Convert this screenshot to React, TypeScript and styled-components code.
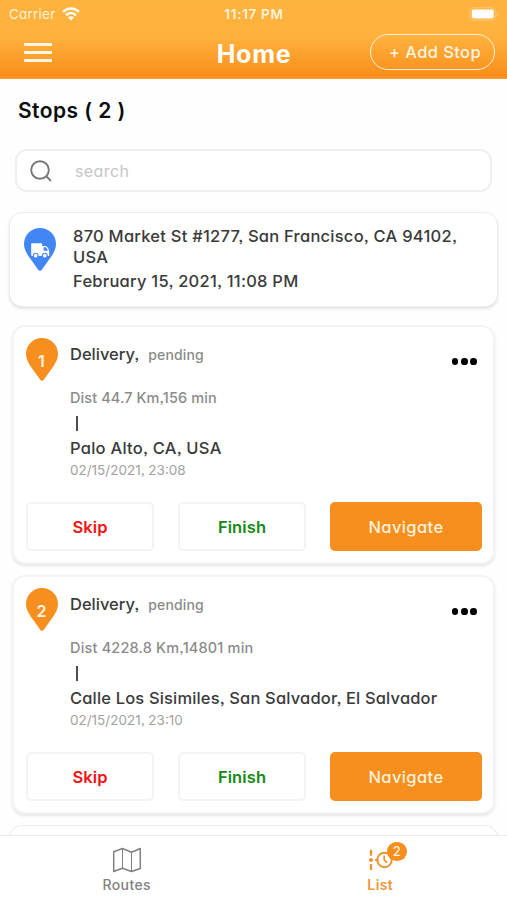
import React from "react";
import styled, { createGlobalStyle } from "styled-components";

const Global = createGlobalStyle`
  * { box-sizing: border-box; }
  body { margin: 0; background: #fefefe; }
  button, input { font: inherit; letter-spacing: inherit; margin: 0; }
`;

const Screen = styled.div`
  width: 507px;
  height: 900px;
  display: flex;
  flex-direction: column;
  overflow: hidden;
  background: #fefefe;
  font-family: Inter, "Liberation Sans", sans-serif;
  font-feature-settings: "cv11", "ss03";
  color: #3a3a3a;
`;

const Header = styled.header`
  flex: none;
  height: 79px;
  background: linear-gradient(#ffb33f 0, #ffb13c 38px, #f98d1b 77px, #fba343 79px);
  color: #fff;
`;

const StatusBar = styled.div`
  height: 27px;
  display: grid;
  grid-template-columns: 1fr auto 1fr;
  align-items: center;
  padding: 1px 8px 0 9px;
  font-size: 13.5px;
  color: #fff2dc;
`;

const Carrier = styled.div`
  display: flex;
  align-items: center;
  gap: 7px;
  letter-spacing: 0.22px;
`;

const Clock = styled.div`
  font-weight: 600;
  font-size: 13.5px;
  letter-spacing: 0.7px;
`;

const BatterySlot = styled.div`
  display: flex;
  justify-content: flex-end;
`;

const NavBar = styled.div`
  height: 50px;
  display: grid;
  grid-template-columns: 1fr auto 1fr;
  align-items: center;
  padding: 0 12px 0 24px;
`;

const MenuButton = styled.button`
  width: 28px;
  height: 19px;
  padding: 0;
  margin-top: 1px;
  border: 0;
  background: none;
  display: flex;
  flex-direction: column;
  justify-content: space-between;
  span { height: 3px; background: #fff6e8; }
`;

const Title = styled.h1`
  margin: 3px 0 0 -11px;
  font-size: 25px;
  line-height: 30px;
  font-weight: 700;
  letter-spacing: 0.75px;
`;

const AddStop = styled.button`
  justify-self: end;
  width: 125px;
  height: 36px;
  padding: 0 0 0 5px;
  border: 1.5px solid #fff1dc;
  border-radius: 18px;
  background: none;
  color: #fff4e2;
  font-size: 16.5px;
  font-weight: 500;
  letter-spacing: 0.4px;
  white-space: nowrap;
`;

const Content = styled.main`
  flex: 1;
  min-height: 0;
  overflow: hidden;
  display: flex;
  flex-direction: column;
`;

const Heading = styled.h2`
  margin: 19px 0 0 18px;
  font-size: 21px;
  line-height: 26px;
  font-weight: 600;
  letter-spacing: 0.43px;
  color: #0c0c0c;
`;

const SearchBox = styled.label`
  flex: none;
  height: 43px;
  margin: 25px 15px 0;
  padding: 0 13px;
  display: flex;
  align-items: center;
  gap: 23px;
  border: 2px solid #efefef;
  border-radius: 12px;
  background: #fff;
  svg { flex: none; }
  input {
    flex: 1;
    border: 0;
    padding: 0;
    outline: 0;
    background: none;
    font-size: 16px;
    letter-spacing: 0.4px;
    font-feature-settings: inherit;
  }
  input::placeholder { color: #c6c6c6; }
`;

const Card = styled.section`
  flex: none;
  border: 1px solid #ececec;
  border-radius: 13px;
  background: #fff;
  box-shadow: 0 2px 3px rgba(0, 0, 0, 0.1);
`;

const DepotCard = styled(Card)`
  height: 95px;
  margin: 20px 9px 0;
  padding: 14px 14px 12px 13px;
  display: flex;
  gap: 16px;
`;

const DepotText = styled.div`
  display: flex;
  flex-direction: column;
  gap: 3px;
  margin-top: -1px;
  font-size: 16.5px;
  line-height: 21px;
  font-weight: 500;
  letter-spacing: 0.25px;
  white-space: nowrap;
`;

const StopCard = styled(Card)<{ $first?: boolean }>`
  height: 239px;
  margin: ${(p) => (p.$first ? 18 : 11)}px 12px 0;
  padding: 10px 11px 11px;
  display: flex;
  flex-direction: column;
  justify-content: space-between;
  border: 2px solid #f4f4f4;
`;

const StopMain = styled.div`
  display: flex;
  gap: 11px;
`;

const StopText = styled.div`
  flex: 1;
  display: flex;
  flex-direction: column;
  white-space: nowrap;
`;

const KindLine = styled.div`
  height: 22px;
  margin-top: 6px;
  display: flex;
  align-items: center;
  gap: 9px;
`;

const Kind = styled.span`
  font-size: 16.5px;
  font-weight: 500;
  letter-spacing: 0;
`;

const State = styled.span`
  font-size: 14px;
  font-weight: 500;
  letter-spacing: 0.15px;
  color: #8b8b8b;
`;

const Distance = styled.div<{ $spacing: number }>`
  margin-top: 24px;
  font-size: 14.5px;
  line-height: 18px;
  font-weight: 500;
  color: #8b8b8b;
  letter-spacing: ${(p) => p.$spacing}px;
`;

const Tick = styled.div`
  width: 2px;
  height: 15px;
  margin: 9px 0 0 6px;
  background: #4c4c4c;
`;

const Place = styled.div<{ $spacing: number }>`
  margin-top: 7px;
  font-size: 16.5px;
  line-height: 20px;
  font-weight: 500;
  letter-spacing: ${(p) => p.$spacing}px;
`;

const DateLine = styled.div`
  margin-top: 3px;
  font-size: 13.5px;
  line-height: 18px;
  color: #a2a2a2;
`;

const MoreButton = styled.button`
  align-self: flex-start;
  margin: 21px 5px 0 0;
  padding: 0;
  border: 0;
  background: none;
  display: flex;
  gap: 2.6px;
  span { width: 6.7px; height: 6.7px; border-radius: 50%; background: #000; }
`;

const Actions = styled.div`
  display: grid;
  grid-template-columns: 128px 128px 152px;
  justify-content: space-between;
  margin-left: 1px;
`;

const Action = styled.button<{ $color: string; $filled?: boolean }>`
  height: 49px;
  padding: 0;
  border: 2px solid ${(p) => (p.$filled ? "#f78f1e" : "#f3f3f3")};
  border-radius: 5px;
  background: ${(p) => (p.$filled ? "#f78f1e" : "#fff")};
  color: ${(p) => p.$color};
  font-size: 16.5px;
  font-weight: ${(p) => (p.$filled ? 500 : 600)};
  letter-spacing: ${(p) => (p.$filled ? 0.4 : 0.1)}px;
`;

const NextCard = styled(Card)`
  height: 95px;
  margin: 11px 9px 0;
`;

const TabBar = styled.nav`
  flex: none;
  height: 65px;
  border-top: 1px solid #ebebeb;
  background: #fff;
  display: grid;
  grid-template-columns: 1fr 1fr;
`;

const Tab = styled.div<{ $active?: boolean }>`
  display: flex;
  flex-direction: column;
  align-items: center;
  padding-top: 9px;
  gap: 1px;
  font-size: 14px;
  line-height: 18px;
  font-weight: ${(p) => (p.$active ? 600 : 500)};
  letter-spacing: 0.4px;
  color: ${(p) => (p.$active ? "#f1953a" : "#828282")};
`;

const IconSlot = styled.div`
  position: relative;
  height: 30px;
  display: flex;
  align-items: center;
`;

const Badge = styled.span`
  position: absolute;
  left: 19px;
  top: -3px;
  width: 20px;
  height: 19px;
  border-radius: 10px;
  background: #f78d1d;
  color: #fff3e2;
  font-size: 13px;
  line-height: 19px;
  font-weight: 500;
  letter-spacing: 0;
  text-align: center;
`;

const PinNumber = styled.text`
  font-size: 16px;
  font-weight: 600;
  fill: #fff4e4;
  text-anchor: middle;
`;

function Pin({ color, children }: { color: string; children: React.ReactNode }) {
  return (
    <svg width="34" height="45" viewBox="0 0 34 45">
      <path
        d="M17 1C8 1 1 8.100 1 17c0 4.800 2.300 8.800 4.900 12.800l9.500 13.100a2 2 0 0 0 3.200 0l9.500-13.100C30.700 25.800 33 21.800 33 17 33 8.100 26 1 17 1Z"
        fill={color}
      />
      {children}
    </svg>
  );
}

function TruckMark() {
  return (
    <g>
      <path d="M8.200 16.300h10.900v2.700h3.400c2 .5 3.400 3 3.700 5.300v4.700h-17c-.6 0-1-.3-1-.8Z" fill="#fff" />
      <path d="M20.600 20.300h2c1 .5 1.800 1.900 2.200 3.400h-4.200Z" fill="#4285f4" />
      <g fill="#fff" stroke="#4285f4" strokeWidth="1.100">
        <circle cx="12.700" cy="28.700" r="2.400" />
        <circle cx="21.800" cy="28.700" r="2.400" />
      </g>
    </g>
  );
}

function WifiIcon() {
  return (
    <svg width="18" height="14" viewBox="0 0 18 14" fill="none" stroke="#fffaf2" strokeWidth="2.600">
      <path d="M1 4.900c4.600-4.600 11.400-4.600 16 0" />
      <path d="M4 8.200c3-2.900 7-2.900 10 0" />
      <path d="M9 13.600 5.900 10.500c1.800-1.700 4.400-1.700 6.200 0Z" fill="#fffaf2" stroke="none" />
    </svg>
  );
}

function BatteryIcon() {
  return (
    <svg width="30" height="14" viewBox="0 0 30 14">
      <rect x=".8" y=".8" width="26" height="12.400" rx="3.800" fill="none" stroke="#ffc878" strokeWidth="1" />
      <rect x="2.800" y="2.500" width="22" height="9" rx="2" fill="#fff" />
      <path d="M28.300 5v4c1.500-.7 1.500-3.300 0-4Z" fill="#ffc878" />
    </svg>
  );
}

function SearchIcon() {
  return (
    <svg width="22" height="22" viewBox="0 0 22 22" fill="none" stroke="#777" strokeWidth="1.900">
      <circle cx="10" cy="10" r="8.800" />
      <path d="m16.200 16.200 4.700 4.800" />
    </svg>
  );
}

function MapIcon() {
  return (
    <svg width="30" height="26" viewBox="0 0 30 26" fill="none" stroke="#808080" strokeWidth="1.500" strokeLinejoin="round">
      <path d="M1.700 4.700 10.500 1.500l9 3.700 8.800-3.700v20l-8.800 3-9-3.200-8.800 3.200Z" />
      <path d="M10.500 1.500v19.800M19.500 5.200v19.300" strokeWidth="1" />
    </svg>
  );
}

function TimelineIcon() {
  return (
    <svg width="25" height="22" viewBox="0 0 25 22" fill="none" stroke="#f3912f" strokeWidth="1.900">
      <path d="M3 .8v6M3 15v6" strokeWidth="2.300" />
      <circle cx="3" cy="11" r="2" fill="#f3912f" stroke="none" />
      <path d="m7 11 3-1.500v3Z" fill="#f3912f" strokeWidth="1" />
      <circle cx="16.500" cy="11" r="7.200" />
      <path d="M16.200 6.800V11l3 2.600" strokeWidth="1.700" />
    </svg>
  );
}

interface Stop {
  number: number;
  distance: string;
  place: string;
  date: string;
  distanceSpacing: number;
  placeSpacing: number;
}

const stops: Stop[] = [
  { number: 1, distance: "Dist 44.7 Km,156 min", place: "Palo Alto, CA, USA", date: "02/15/2021, 23:08", distanceSpacing: 0.1, placeSpacing: 0.25 },
  { number: 2, distance: "Dist 4228.8 Km,14801 min", place: "Calle Los Sisimiles, San Salvador, El Salvador", date: "02/15/2021, 23:10", distanceSpacing: 0.18, placeSpacing: 0.16 },
];

function StopItem({ stop }: { stop: Stop }) {
  return (
    <StopCard $first={stop.number === 1}>
      <StopMain>
        <Pin color="#f78f1e">
          <PinNumber x="16.5" y="29.5">{stop.number}</PinNumber>
        </Pin>
        <StopText>
          <KindLine>
            <Kind>Delivery,</Kind>
            <State>pending</State>
          </KindLine>
          <Distance $spacing={stop.distanceSpacing}>{stop.distance}</Distance>
          <Tick />
          <Place $spacing={stop.placeSpacing}>{stop.place}</Place>
          <DateLine>{stop.date}</DateLine>
        </StopText>
        <MoreButton aria-label="More"><span /><span /><span /></MoreButton>
      </StopMain>
      <Actions>
        <Action $color="#fa1010">Skip</Action>
        <Action $color="#128a12">Finish</Action>
        <Action $color="#fff1dd" $filled>Navigate</Action>
      </Actions>
    </StopCard>
  );
}

export default function App() {
  return (
    <Screen>
      <Global />
      <Header>
        <StatusBar>
          <Carrier>Carrier <WifiIcon /></Carrier>
          <Clock>11:17 PM</Clock>
          <BatterySlot><BatteryIcon /></BatterySlot>
        </StatusBar>
        <NavBar>
          <MenuButton aria-label="Menu"><span /><span /><span /></MenuButton>
          <Title>Home</Title>
          <AddStop>+ Add Stop</AddStop>
        </NavBar>
      </Header>
      <Content>
        <Heading>Stops ( 2 )</Heading>
        <SearchBox>
          <SearchIcon />
          <input placeholder="search" />
        </SearchBox>
        <DepotCard>
          <Pin color="#4285f4"><TruckMark /></Pin>
          <DepotText>
            <div>870 Market St #1277, San Francisco, CA 94102,<br />USA</div>
            <div>February 15, 2021, 11:08 PM</div>
          </DepotText>
        </DepotCard>
        {stops.map((stop) => <StopItem key={stop.number} stop={stop} />)}
        <NextCard />
      </Content>
      <TabBar>
        <Tab>
          <IconSlot><MapIcon /></IconSlot>
          Routes
        </Tab>
        <Tab $active>
          <IconSlot><TimelineIcon /><Badge>2</Badge></IconSlot>
          List
        </Tab>
      </TabBar>
    </Screen>
  );
}
